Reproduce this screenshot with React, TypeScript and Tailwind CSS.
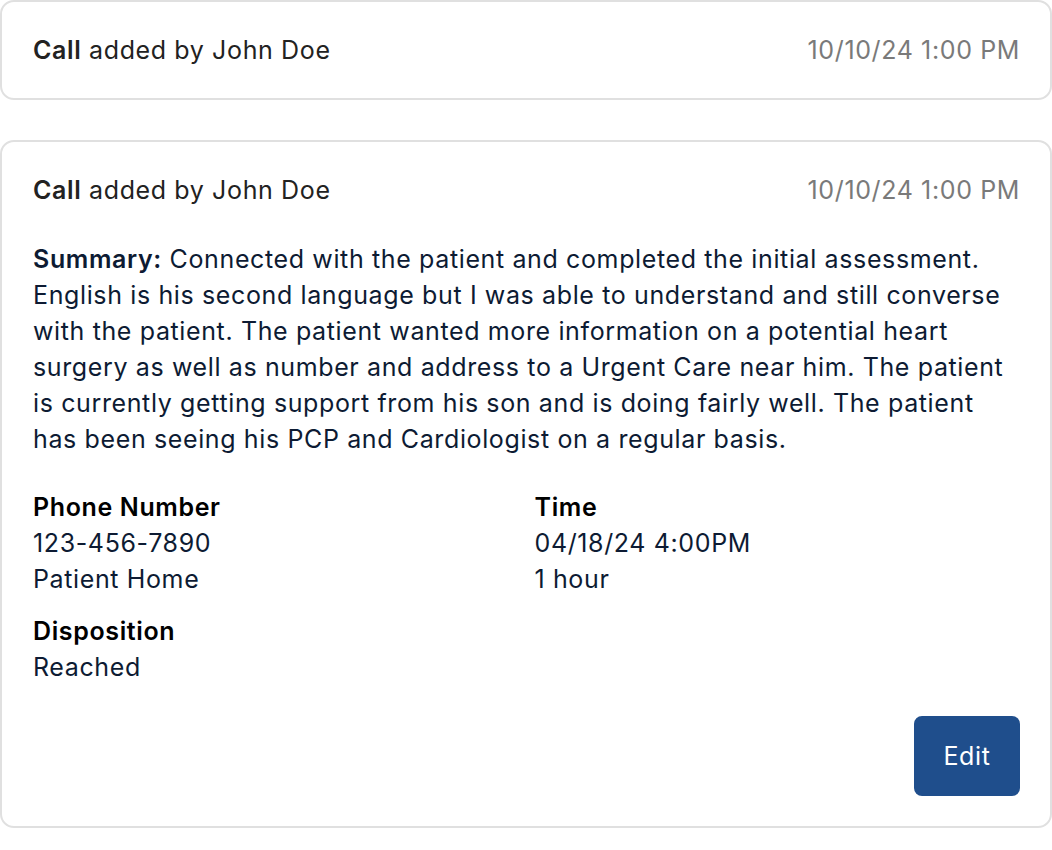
export default function App() {
  return (
    <div className="min-h-screen bg-white font-['Inter',sans-serif] text-[25px] leading-[36px] tracking-[0.025em]">
      <div className="flex flex-col gap-10">
        {/* Collapsed entry */}
        <div className="flex items-center justify-between rounded-[14px] border-2 border-[#e0e0e0] py-[30px] pl-[31px] pr-[30px]">
          <p className="text-[#222222]">
            <span className="font-semibold">Call</span> added by John Doe
          </p>
          <span className="text-[#7a7a7a]">10/10/24 1:00 PM</span>
        </div>

        {/* Expanded entry */}
        <div className="flex flex-col rounded-[14px] border-2 border-[#e0e0e0] py-[30px] pl-[31px] pr-[30px]">
          <div className="flex items-center justify-between">
            <p className="text-[#222222]">
              <span className="font-semibold">Call</span> added by John Doe
            </p>
            <span className="text-[#7a7a7a]">10/10/24 1:00 PM</span>
          </div>

          <p className="mt-[33px] text-[#0d1b33]">
            <span className="font-semibold">Summary:</span> Connected with the patient and completed the initial
            assessment. English is his second language but I was able to understand and still converse with the
            patient. The patient wanted more information on a potential heart surgery as well as number and address
            to a Urgent Care near him. The patient is currently getting support from his son and is doing fairly
            well. The patient has been seeing his PCP and Cardiologist on a regular basis.
          </p>

          <div className="mt-8 grid grid-cols-2 gap-x-4 gap-y-4">
            <div>
              <div className="font-semibold text-black">Phone Number</div>
              <div className="text-[#0d1b33]">123-456-7890</div>
              <div className="text-[#0d1b33]">Patient Home</div>
            </div>
            <div>
              <div className="font-semibold text-black">Time</div>
              <div className="text-[#0d1b33]">04/18/24 4:00PM</div>
              <div className="text-[#0d1b33]">1 hour</div>
            </div>
            <div>
              <div className="font-semibold text-black">Disposition</div>
              <div className="text-[#0d1b33]">Reached</div>
            </div>
          </div>

          <div className="mt-[31px] flex justify-end">
            <button className="h-20 w-[106px] rounded-lg bg-[#1f4e8c] text-white">Edit</button>
          </div>
        </div>
      </div>
    </div>
  );
}
